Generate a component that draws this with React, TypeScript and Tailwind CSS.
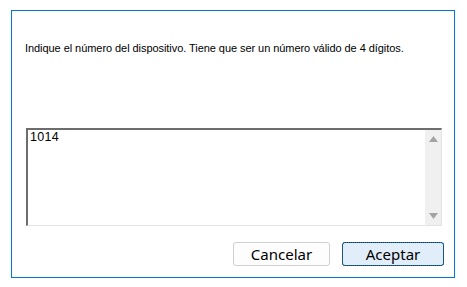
import React from "react";

export default function App() {
  return (
    <div className="w-[467px] h-[287px] bg-white pt-[10px] pl-[11px]">
      <div className="w-[444px] h-[268px] border border-[#0078d7] flex flex-col">
        <div
          className="mt-[31px] ml-[13px] text-[11px] leading-[13px] tracking-[-0.06px] text-black whitespace-nowrap"
          style={{ fontFamily: '"Liberation Sans", Arial, sans-serif' }}
        >
          Indique el número del dispositivo. Tiene que ser un número válido de 4 dígitos.
        </div>
        <div className="mt-[73px] ml-[14px] w-[416px] h-[98px] flex border-t-2 border-l-2 border-t-[#6d6d6d] border-l-[#6d6d6d] border-r border-b border-r-[#e3e3e3] border-b-[#e3e3e3] bg-white">
          <div
            className="flex-1 pl-[2px] pt-[0px] text-[12.5px] leading-[14px] tracking-[0.3px] text-black"
            style={{ fontFamily: '"Liberation Sans", Arial, sans-serif' }}
          >
            1014
          </div>
          <div className="w-[16px] h-full bg-[#f0f0f0] flex flex-col items-center justify-between py-[6px]">
            <svg width="9" height="6" viewBox="0 0 9 6">
              <polygon points="4.5,0 9,6 0,6" fill="#a3a3a3" />
            </svg>
            <svg width="9" height="6" viewBox="0 0 9 6">
              <polygon points="0,0 9,0 4.5,6" fill="#a3a3a3" />
            </svg>
          </div>
        </div>
        <div
          className="mt-[16px] flex justify-end gap-[12px] pr-[10px]"
          style={{ fontFamily: '"Noto Sans", "Open Sans", sans-serif' }}
        >
          <button className="w-[97px] h-[24px] rounded-[3px] border border-[#d0d0d0] bg-[#fdfdfd] text-[15px] leading-[20px] text-black">
            Cancelar
          </button>
          <button className="w-[102px] h-[24px] rounded-[3px] border border-[#0078d7] bg-[#e1eefa] text-[15px] leading-[20px] text-black outline-1 outline-dotted outline-[#333333] outline-offset-[-1px]">
            Aceptar
          </button>
        </div>
      </div>
    </div>
  );
}
